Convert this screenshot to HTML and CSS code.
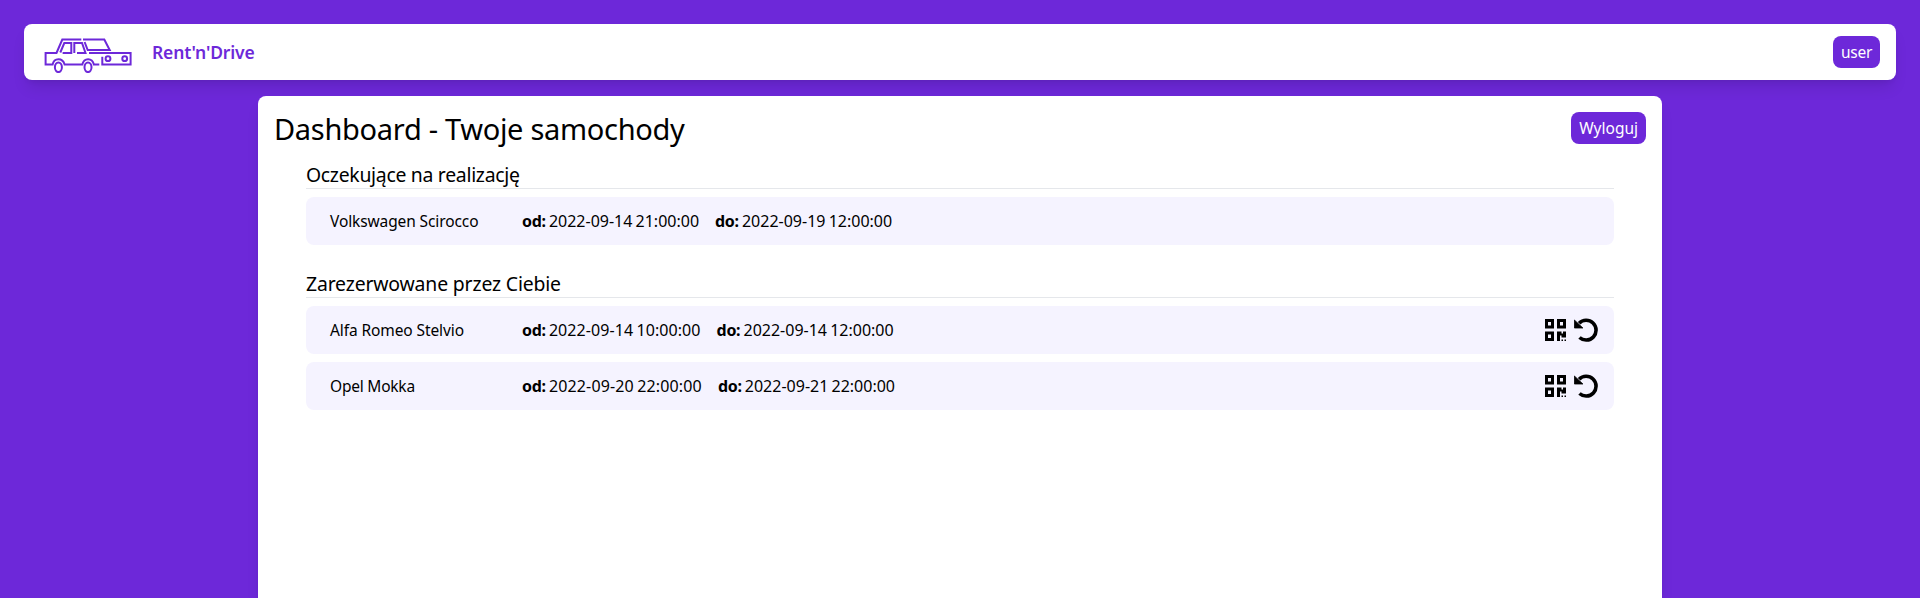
FILE: index.html
```
<!DOCTYPE html>
<html lang="pl">
<head>
<meta charset="utf-8">
<title>Rent'n'Drive</title>
<link rel="stylesheet" href="styles.css">
</head>
<body>
<svg class="defs" aria-hidden="true">
<symbol id="qr" viewBox="0 0 21 22"><path fill-rule="evenodd" d="M0 0h9v9.500H0zM3 3v3.500h3V3zM12 0h9v9.500h-9zM15 3v3.500h3V3zM0 12.500h9V22H0zM3 15.500v3.500h3v-3.500zM12 12.500h4.500v2h1.500v-2h3v6h-4.500v-2H15V22h-3zM16.500 20.500H18V22h-1.500zM19.500 20.500H21V22h-1.500z"/></symbol>
<symbol id="undo" viewBox="0 0 24 24"><path d="M5.100 5.200A9.900 9.900 0 1 1 5.500 19.500" fill="none" stroke="#000" stroke-width="3.600"/><path d="M.4 2v8h8.500z" stroke="#000" stroke-linejoin="round" stroke-width=".8"/></symbol>
</svg>
<header class="navbar">
<svg class="logo" viewBox="-.6 -.5 88 36" fill="none" stroke="#6d28d9" stroke-width="2"><path d="M36.700 2H17.700L11.900 15.500H1V27H8C9.500 20 18 20 20 27H37.700C39.500 20 47.500 20 49.300 27H54.700M38.400 2H59.700L65.100 12.500H43.100L40 4.500M44.400 15.500H86V27H57.700V19.200M15.700 15L19.700 5.500H26.700V15.500H18M29.700 15.500V5.500H37.400L40.900 15.500H32.400"/><ellipse cx="13.800" cy="29.800" rx="3.500" ry="4.800"/><ellipse cx="43.400" cy="29.800" rx="3.500" ry="4.800"/><circle cx="63.400" cy="21.200" r="2.400"/><circle cx="80.100" cy="21.200" r="2.400"/></svg>
<span class="brand">Rent'n'Drive</span>
<button class="button user">user</button>
</header>
<main class="panel">
<div class="panel-head"><h1 class="title">Dashboard - Twoje samochody</h1><button class="button logout">Wyloguj</button></div>
<section class="group">
<h2 class="group-title pending">Oczekujące na realizację</h2>
<div class="row"><span class="car scirocco">Volkswagen Scirocco</span><span class="date"><b>od:</b> <span>2022-09-14 21:00:00</span></span><span class="date"><b>do:</b> <span>2022-09-19 12:00:00</span></span></div>
</section>
<section class="group">
<h2 class="group-title reserved">Zarezerwowane przez Ciebie</h2>
<div class="row"><span class="car stelvio">Alfa Romeo Stelvio</span><span class="date morning"><b>od:</b> <span>2022-09-14 10:00:00</span></span><span class="date"><b>do:</b> <span>2022-09-14 12:00:00</span></span><span class="actions"><svg class="qr"><use href="#qr"/></svg><svg class="undo"><use href="#undo"/></svg></span></div>
<div class="row"><span class="car mokka">Opel Mokka</span><span class="date evening"><b>od:</b> <span>2022-09-20 22:00:00</span></span><span class="date"><b>do:</b> <span>2022-09-21 22:00:00</span></span><span class="actions"><svg class="qr"><use href="#qr"/></svg><svg class="undo"><use href="#undo"/></svg></span></div>
</section>
</main>
</body>
</html>
```
FILE: styles.css
```
* { box-sizing: border-box; margin: 0; }
body { height: 598px; overflow: hidden; display: flex; flex-direction: column; padding-top: 24px; background: #6d28d9; color: #000; font: 16px/24px "Noto Sans", sans-serif; }
.defs { position: absolute; width: 0; height: 0; }
.navbar { display: flex; flex: none; align-items: center; height: 56px; margin: 0 24px 16px; padding: 0 16px 0 20px; background: #fff; border-radius: 8px; box-shadow: 0 10px 15px -3px rgba(0,0,0,.1), 0 4px 6px -4px rgba(0,0,0,.1); }
.logo { width: 88px; height: 36px; margin-top: 6px; }
.brand { margin-left: 20px; color: #6d28d9; font-size: 17.5px; font-weight: 600; letter-spacing: -.17px; }
.button { height: 32px; margin-left: auto; padding: 0 8px; border: 0; border-radius: 8px; background: #6d28d9; color: #fff; font: inherit; font-size: 15.5px; }
.user { letter-spacing: -.3px; }
.panel { flex: 1; width: 1404px; margin: 0 auto; padding: 16px; background: #fff; border-radius: 8px 8px 0 0; box-shadow: 0 10px 15px -3px rgba(0,0,0,.1), 0 4px 6px -4px rgba(0,0,0,.1); }
.panel-head { display: flex; align-items: flex-start; height: 49px; }
.title { font-size: 29px; line-height: 34px; font-weight: 400; letter-spacing: -.3px; }
.group { margin: 0 32px 25px; }
.group-title { height: 28px; border-bottom: 1px solid #e5e7eb; font-size: 19.4px; line-height: 28px; font-weight: 400; }
.pending { letter-spacing: -.29px; }
.reserved { letter-spacing: -.16px; }
.row { display: flex; align-items: center; height: 48px; margin-top: 8px; padding: 0 16px 0 24px; background: #f5f3ff; border-radius: 8px; }
.car { width: 192px; font-size: 15.5px; }
.scirocco { letter-spacing: -.11px; }
.stelvio { letter-spacing: -.1px; }
.mokka { letter-spacing: -.22px; }
.date { margin-right: 16px; white-space: nowrap; word-spacing: -1px; }
.date b { letter-spacing: -.3px; }
.morning span { letter-spacing: .08px; }
.evening span { letter-spacing: .15px; }
.actions { display: flex; align-items: center; gap: 8px; margin-left: auto; }
.qr { width: 21px; height: 22px; }
.undo { width: 24px; height: 24px; }
```
